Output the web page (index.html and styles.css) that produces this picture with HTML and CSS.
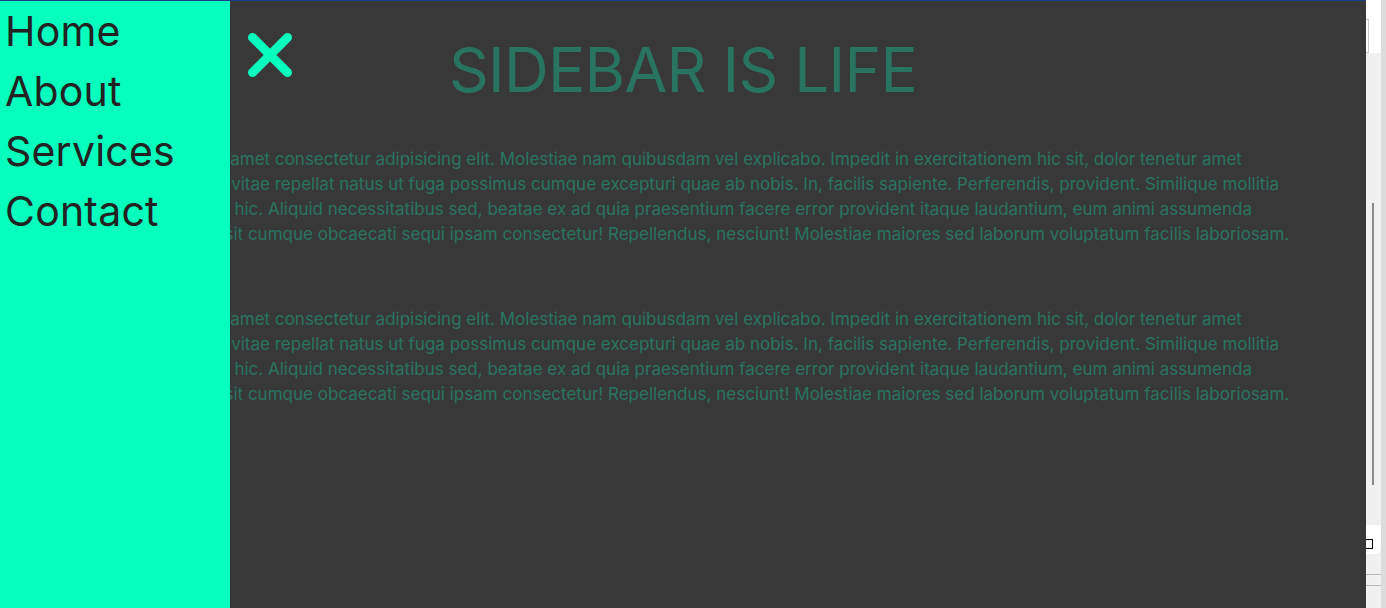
FILE: index.html
```html
<!DOCTYPE html>
<html lang="en">
<head>
<meta charset="utf-8">
<title>Sidebar is life</title>
<link rel="stylesheet" href="styles.css">
</head>
<body>
<div class="screen">
  <main class="page">
    <nav class="sidebar">
      <a href="#" class="nav-link">Home</a>
      <a href="#" class="nav-link">About</a>
      <a href="#" class="nav-link">Services</a>
      <a href="#" class="nav-link">Contact</a>
    </nav>
    <button class="close" aria-label="Close sidebar">
      <svg width="46" height="46" viewBox="0 0 46 46"><path d="M5.5 5.5 L40.5 40.5 M40.5 5.5 L5.5 40.5" fill="none" stroke="#06ffbd" stroke-width="9" stroke-linecap="round"/></svg>
    </button>
    <h1 class="title">SIDEBAR IS LIFE</h1>
    <p class="text">
      <span class="line">Lorem ipsum dolor sit amet consectetur adipisicing elit. Molestiae nam quibusdam vel explicabo. Impedit in exercitationem hic sit, dolor tenetur amet</span>
      <span class="line">eius quos fugit dolore vitae repellat natus ut fuga possimus cumque excepturi quae ab nobis. In, facilis sapiente. Perferendis, provident. Similique mollitia</span>
      <span class="line">ratione quod deserunt hic. Aliquid necessitatibus sed, beatae ex ad quia praesentium facere error provident itaque laudantium, eum animi assumenda</span>
      <span class="line">quidem rerum dolore sit cumque obcaecati sequi ipsam consectetur! Repellendus, nesciunt! Molestiae maiores sed laborum voluptatum facilis laboriosam.</span>
    </p>
    <p class="text">
      <span class="line">Lorem ipsum dolor sit amet consectetur adipisicing elit. Molestiae nam quibusdam vel explicabo. Impedit in exercitationem hic sit, dolor tenetur amet</span>
      <span class="line">eius quos fugit dolore vitae repellat natus ut fuga possimus cumque excepturi quae ab nobis. In, facilis sapiente. Perferendis, provident. Similique mollitia</span>
      <span class="line">ratione quod deserunt hic. Aliquid necessitatibus sed, beatae ex ad quia praesentium facere error provident itaque laudantium, eum animi assumenda</span>
      <span class="line">quidem rerum dolore sit cumque obcaecati sequi ipsam consectetur! Repellendus, nesciunt! Molestiae maiores sed laborum voluptatum facilis laboriosam.</span>
    </p>
  </main>
  <aside class="chrome">
    <div class="chrome-top"><span class="chrome-field"></span></div>
    <div class="chrome-mid"><span class="chrome-scroll"></span></div>
    <div class="chrome-box"><span class="chrome-check"></span></div>
    <div class="chrome-tab"></div>
  </aside>
</div>
</body>
</html>
```

FILE: styles.css
```css
* { box-sizing: border-box; }

html, body {
  margin: 0;
  padding: 0;
  height: 608px;
  overflow: hidden;
  background: #f0f0f0;
}

.screen {
  display: flex;
  width: 1386px;
  height: 608px;
}

.page {
  position: relative;
  width: 1366px;
  height: 608px;
  flex: none;
  background: #383838;
  border-top: 1px solid #1c3d8c;
  overflow: hidden;
  font-family: "Inter", "Noto Sans", sans-serif;
  padding: 0 0 0 52px;
}

.sidebar {
  position: absolute;
  left: 0;
  top: 0;
  bottom: 0;
  width: 230px;
  background: #06ffbd;
  display: flex;
  flex-direction: column;
  z-index: 2;
}

.nav-link {
  display: block;
  padding-left: 5px;
  font-size: 41px;
  line-height: 60px;
  letter-spacing: 0.2px;
  color: #222222;
  text-decoration: none;
  font-weight: 400;
}

.close {
  position: absolute;
  left: 247px;
  top: 31px;
  width: 46px;
  height: 46px;
  padding: 0;
  border: 0;
  background: transparent;
  display: flex;
  cursor: pointer;
  z-index: 3;
}

.title {
  margin: 30px 0 0 -52px;
  text-align: center;
  font-size: 62px;
  line-height: 77px;
  font-weight: 400;
  color: #287460;
  letter-spacing: -0.7px;
}

.text {
  margin: 39px 0 0;
  font-size: 17px;
  line-height: 25px;
  color: #287460;
}

.text + .text {
  margin-top: 60px;
}

.line {
  display: block;
  white-space: nowrap;
}

/* right-hand window fragment */
.chrome {
  width: 20px;
  height: 608px;
  display: flex;
  flex-direction: column;
  background: #f0f0f0;
  border-right: 5px solid #dcdcdc;
}

.chrome-top {
  height: 63px;
  background: #ffffff;
  padding-top: 19px;
}

.chrome-field {
  display: block;
  width: 3px;
  height: 34px;
  border: 1px solid #c8c8c8;
  border-left: 0;
}

.chrome-mid {
  flex: 1;
  padding: 150px 0 40px 6px;
}

.chrome-scroll {
  display: block;
  width: 2px;
  height: 282px;
  background: #8a8a8a;
}

.chrome-box {
  height: 46px;
  margin-bottom: 20px;
  background: #ffffff;
  border-radius: 0 0 6px 0;
  padding-top: 14px;
}

.chrome-check {
  display: block;
  width: 7px;
  height: 10px;
  border: 1px solid #000;
  border-left: 0;
}

.chrome-tab {
  height: 23px;
  margin-bottom: 22px;
  border-top: 1px solid #b8b8b8;
  border-bottom: 1px solid #b8b8b8;
}
```
